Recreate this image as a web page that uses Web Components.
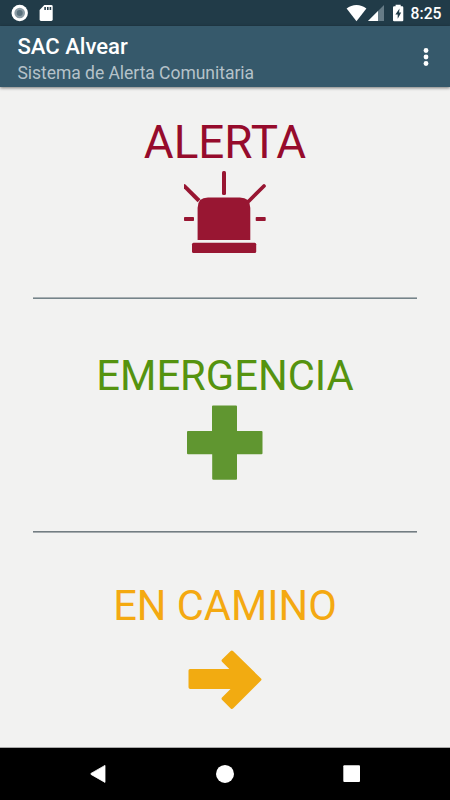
<!DOCTYPE html>
<html lang="es">
<head>
<meta charset="utf-8">
<title>SAC Alvear</title>
<style>
  body {
    margin: 0;
    font-family: Roboto, "Liberation Sans", sans-serif;
  }
</style>
</head>
<body>
<sac-app></sac-app>

<script>
/** Android status bar: notifications on the left, system icons and clock on the right. */
class StatusBarElement extends HTMLElement {
  connectedCallback() {
    this.attachShadow({ mode: "open" });
    this.shadowRoot.innerHTML = `
      <style>
        :host {
          display: flex;
          align-items: center;
          justify-content: space-between;
          height: 26px;
          background: #213b48;
          color: #fff;
        }
        svg { display: block; }
        .clock {
          width: 40px;
          box-sizing: border-box;
          height: 26px;
          padding: 1px 0 0 0.6px;
          font-size: 15.7px;
          font-weight: 500;
          line-height: 26px;
        }
        .system { display: flex; }
      </style>
      <svg width="60" height="26" viewBox="0 0 60 26">
        <circle cx="19.7" cy="13" r="8.2" fill="#fff"/>
        <circle cx="19.7" cy="13" r="5.3" fill="#8b9ba4"/>
        <circle cx="19.7" cy="13" r="3" fill="#5a717d"/>
        <path d="M44.3 5H51.3Q52.7 5 52.7 6.4V19.6Q52.7 21 51.3 21H41Q39.6 21 39.6 19.6V10Z" fill="#fff"/>
        <path d="M44.3 7h1.6v3h-1.6zM47 7h1.6v3H47zM49.6 7h1.6v3h-1.6z" fill="#213b48"/>
      </svg>
      <div class="system">
        <svg width="64" height="26" viewBox="346 0 64 26">
          <path d="M356.5 21.3L346.6 8.5Q351 5 356.5 5T366.4 8.5Z" fill="#fff"/>
          <path d="M384 5V21H368Z" fill="#667b86"/>
          <path d="M378 11V21H368Z" fill="#fff"/>
          <path d="M395.6 4.7H400.7V6.3H402.2Q403.3 6.3 403.3 7.4V20.2Q403.3 21.3 402.2 21.3H394.1Q393 21.3 393 20.2V7.4Q393 6.3 394.1 6.3H395.6Z" fill="#fff"/>
          <path d="M399.5 8.6L395.4 14.6H397.7V18.7L401.2 12.6H399.1Z" fill="#213b48"/>
        </svg>
        <div class="clock">8:25</div>
      </div>
    `;
  }
}
customElements.define("status-bar", StatusBarElement);

class AppToolbarElement extends HTMLElement {
  connectedCallback() {
    this.attachShadow({ mode: "open" });
    this.shadowRoot.innerHTML = `
      <style>
        :host {
          display: flex;
          justify-content: space-between;
          align-items: center;
          box-sizing: border-box;
          height: 61px;
          padding: 0 18px 0 17px;
          background: #36596b;
          box-shadow: 0 1px 3px rgba(0, 0, 0, 0.5);
          z-index: 1;
        }
        .titles {
          display: grid;
          gap: 2px;
          padding: 4px 0 0 0.4px;
        }
        .title {
          color: #fff;
          font-size: 22.1px;
          font-weight: 500;
          line-height: 26px;
        }
        .subtitle {
          color: #b5c2c9;
          font-size: 17.5px;
          letter-spacing: -0.03px;
          line-height: 24px;
        }
        svg { display: block; }
      </style>
      <div class="titles">
        <div class="title"><slot name="title"></slot></div>
        <div class="subtitle"><slot name="subtitle"></slot></div>
      </div>
      <svg width="12" height="24" viewBox="0 0 12 24" fill="#fff">
        <circle cx="6" cy="5.5" r="2.4"/>
        <circle cx="6" cy="12" r="2.4"/>
        <circle cx="6" cy="18.5" r="2.4"/>
      </svg>
    `;
  }
}
customElements.define("app-toolbar", AppToolbarElement);

/** A big labelled action. The icon is passed in the default slot. */
class AlertActionElement extends HTMLElement {
  connectedCallback() {
    this.attachShadow({ mode: "open" });
    this.shadowRoot.innerHTML = `
      <style>
        :host {
          display: flex;
          flex-direction: column;
          align-items: center;
          box-sizing: border-box;
        }
        .label {
          line-height: 52px;
          white-space: nowrap;
        }
        ::slotted(svg) { display: block; }
      </style>
      <div class="label">${this.getAttribute("label")}</div>
      <slot></slot>
    `;
  }
}
customElements.define("alert-action", AlertActionElement);

class NavigationBarElement extends HTMLElement {
  connectedCallback() {
    this.attachShadow({ mode: "open" });
    this.shadowRoot.innerHTML = `
      <style>
        :host {
          display: flex;
          justify-content: center;
          box-sizing: border-box;
          height: 53px;
          border-top: 1px solid #a9a9a9;
          background: #000;
        }
        svg { display: block; }
      </style>
      <svg width="310" height="52" viewBox="70 748 310 52" fill="#fff">
        <path d="M105 765.4V782.4L91 774.4Q90.4 773.9 91 773.4Z" stroke="#fff" stroke-width=".8" stroke-linejoin="round"/>
        <circle cx="225" cy="773.9" r="9"/>
        <rect x="343.3" y="765.3" width="16.7" height="16.7" rx="1"/>
      </svg>
    `;
  }
}
customElements.define("navigation-bar", NavigationBarElement);

class SacAppElement extends HTMLElement {
  connectedCallback() {
    this.attachShadow({ mode: "open" });
    this.shadowRoot.innerHTML = `
      <style>
        :host {
          display: flex;
          flex-direction: column;
          width: 450px;
          height: 800px;
          overflow: hidden;
          background: #f2f2f1;
        }
        main {
          flex: 1;
          display: grid;
          grid-template-rows: 210px 2px 232px 2px 1fr;
        }
        hr {
          width: 384px;
          height: 2px;
          margin: 0 auto;
          border: 0;
          background: linear-gradient(#a9b0b3 50%, #75848a 50%);
        }
        hr.flip { background: linear-gradient(#737d82 50%, #a5abae 50%); }
        .alerta { color: #960b2c; font-size: 45.8px; padding-top: 30px; }
        .emergencia { color: #55930f; font-size: 41.7px; padding-top: 51px; }
        .camino { color: #f4a911; font-size: 41.6px; padding-top: 47px; }
      </style>
      <status-bar></status-bar>
      <app-toolbar>
        <span slot="title">SAC Alvear</span>
        <span slot="subtitle">Sistema de Alerta Comunitaria</span>
      </app-toolbar>
      <main>
        <alert-action class="alerta" label="ALERTA">
          <svg width="100" height="90" viewBox="175 169 100 90">
            <g fill="#981632">
              <path d="M197.6 240V208Q197.6 197.6 208 197.6H239.8Q250.3 197.6 250.3 208V240Z"/>
              <rect x="192" y="242.7" width="64.2" height="10.4" rx="1.5"/>
              <rect x="222" y="171" width="4" height="24" rx="1.5"/>
              <rect x="184" y="217" width="10" height="4" rx=".8"/>
              <rect x="255.7" y="217" width="10" height="4" rx=".8"/>
            </g>
            <path d="M184 184L185.5 184.6L200.5 199.2L197.6 202.2L184 188.4Z" fill="#981632"/>
            <path d="M264 186L248.7 201.2" stroke="#981632" stroke-width="3.7" stroke-linecap="round"/>
          </svg>
        </alert-action>
        <hr>
        <alert-action class="emergencia" label="EMERGENCIA">
          <svg width="100" height="90" viewBox="175 402 100 90">
            <path d="M213 405.5H236Q237 405.5 237 406.5V431H261.5Q262.5 431 262.5 432V453.3Q262.5 454.3 261.5 454.3H237V478.7Q237 479.7 236 479.7H213.5Q212.2 479.7 212.2 478.7V454.3H188Q187 454.3 187 453.3V432Q187 431 188 431H212V406.5Q212 405.5 213 405.5Z" fill="#609630"/>
          </svg>
        </alert-action>
        <hr class="flip">
        <alert-action class="camino" label="EN CAMINO">
          <svg width="100" height="90" viewBox="175 632 100 90">
            <path d="M190 669H229.3L222 661.7Q221 660.6 222 659.6L230.7 650.9Q231.9 650 233 651L261 678.5Q262 679.5 261 680.5L233 708.6Q231.9 709.6 230.7 708.5L222 699.8Q221 698.7 222 697.6L230.5 689H190.3Q188.5 689 188.5 687.3V670.6Q188.5 669 190 669Z" fill="#f2ab11"/>
          </svg>
        </alert-action>
      </main>
      <navigation-bar></navigation-bar>
    `;
  }
}
customElements.define("sac-app", SacAppElement);
</script>
</body>
</html>
